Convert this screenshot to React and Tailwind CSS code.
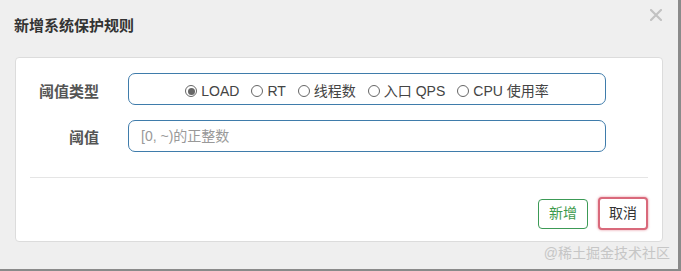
import React, { useState } from 'react';

const types = ['LOAD', 'RT', '线程数', '入口 QPS', 'CPU 使用率'];

function Radio({ label, checked, onSelect }) {
  return (
    <label className="flex items-center gap-[4px] cursor-pointer" onClick={onSelect}>
      <span className="w-[12px] h-[12px] rounded-full border border-[#666] flex items-center justify-center bg-white">
        {checked && <span className="w-[7px] h-[7px] rounded-full bg-[#666]" />}
      </span>
      <span>{label}</span>
    </label>
  );
}

export default function App() {
  const [grade, setGrade] = useState(0);
  const [count, setCount] = useState('');

  return (
    <div className="w-[681px] h-[271px] bg-[#efefef] border-r-[3px] border-b-2 border-[#8a8a8a] flex flex-col font-['Liberation_Sans','Noto_Sans_CJK_SC',sans-serif]">
      <div className="h-[57px] flex justify-between items-start pl-[14px] pr-[14px] pt-[16px]">
        <h3 className="text-[15px] leading-[20px] font-bold text-[#333]">新增系统保护规则</h3>
        <button className="-mt-[7px] mr-[2px] text-[#c2c2c2]">
          <svg width="12" height="12" viewBox="0 0 12 12">
            <path d="M1 1 L11 11 M11 1 L1 11" stroke="currentColor" strokeWidth="2.2" strokeLinecap="round" />
          </svg>
        </button>
      </div>

      <div className="ml-[15px] w-[648px] h-[185px] bg-white border border-[#dcdcdc] rounded-[4px] flex flex-col pt-[15px]">
        <div className="flex items-center">
          <div className="w-[83px] text-right text-[15px] font-bold text-[#555] pt-[6px]">阈值类型</div>
          <div className="ml-[29px] w-[478px] h-[32px] border border-[#3f7cab] rounded-[7px] flex items-center justify-center gap-[12px] pt-[4px] text-[14px] text-[#444]">
            {types.map((t, i) => (
              <Radio key={t} label={t} checked={grade === i} onSelect={() => setGrade(i)} />
            ))}
          </div>
        </div>

        <div className="flex items-center mt-[15px]">
          <div className="w-[83px] text-right text-[15px] font-bold text-[#555] pt-[5px]">阈值</div>
          <input
            type="text"
            value={count}
            onChange={(e) => setCount(e.target.value)}
            placeholder="[0, ~)的正整数"
            className="ml-[29px] w-[478px] h-[32px] border border-[#3f7cab] rounded-[7px] px-[12px] text-[14px] text-[#444] placeholder:text-[#999] outline-none"
          />
        </div>

        <div className="mx-[14px] mt-[25px] border-t border-[#e5e5e5]" />

        <div className="flex justify-end items-center gap-[10px] mr-[14px] mt-[19px]">
          <button className="w-[50px] h-[30px] border border-[#3c9a56] rounded-[4px] text-[#3c9a4c] text-[14px] bg-white">新增</button>
          <button className="w-[50px] h-[33px] border-2 border-[#d9697b] rounded-[4px] text-[#333] text-[14px] bg-white shadow-[0_0_2px_1px_rgba(217,105,123,0.35)]">取消</button>
        </div>
      </div>

      <div className="flex justify-end pr-[8px] mt-[2px] text-[14px] leading-[18px] text-[#c6c6c6]">@稀土掘金技术社区</div>
    </div>
  );
}
